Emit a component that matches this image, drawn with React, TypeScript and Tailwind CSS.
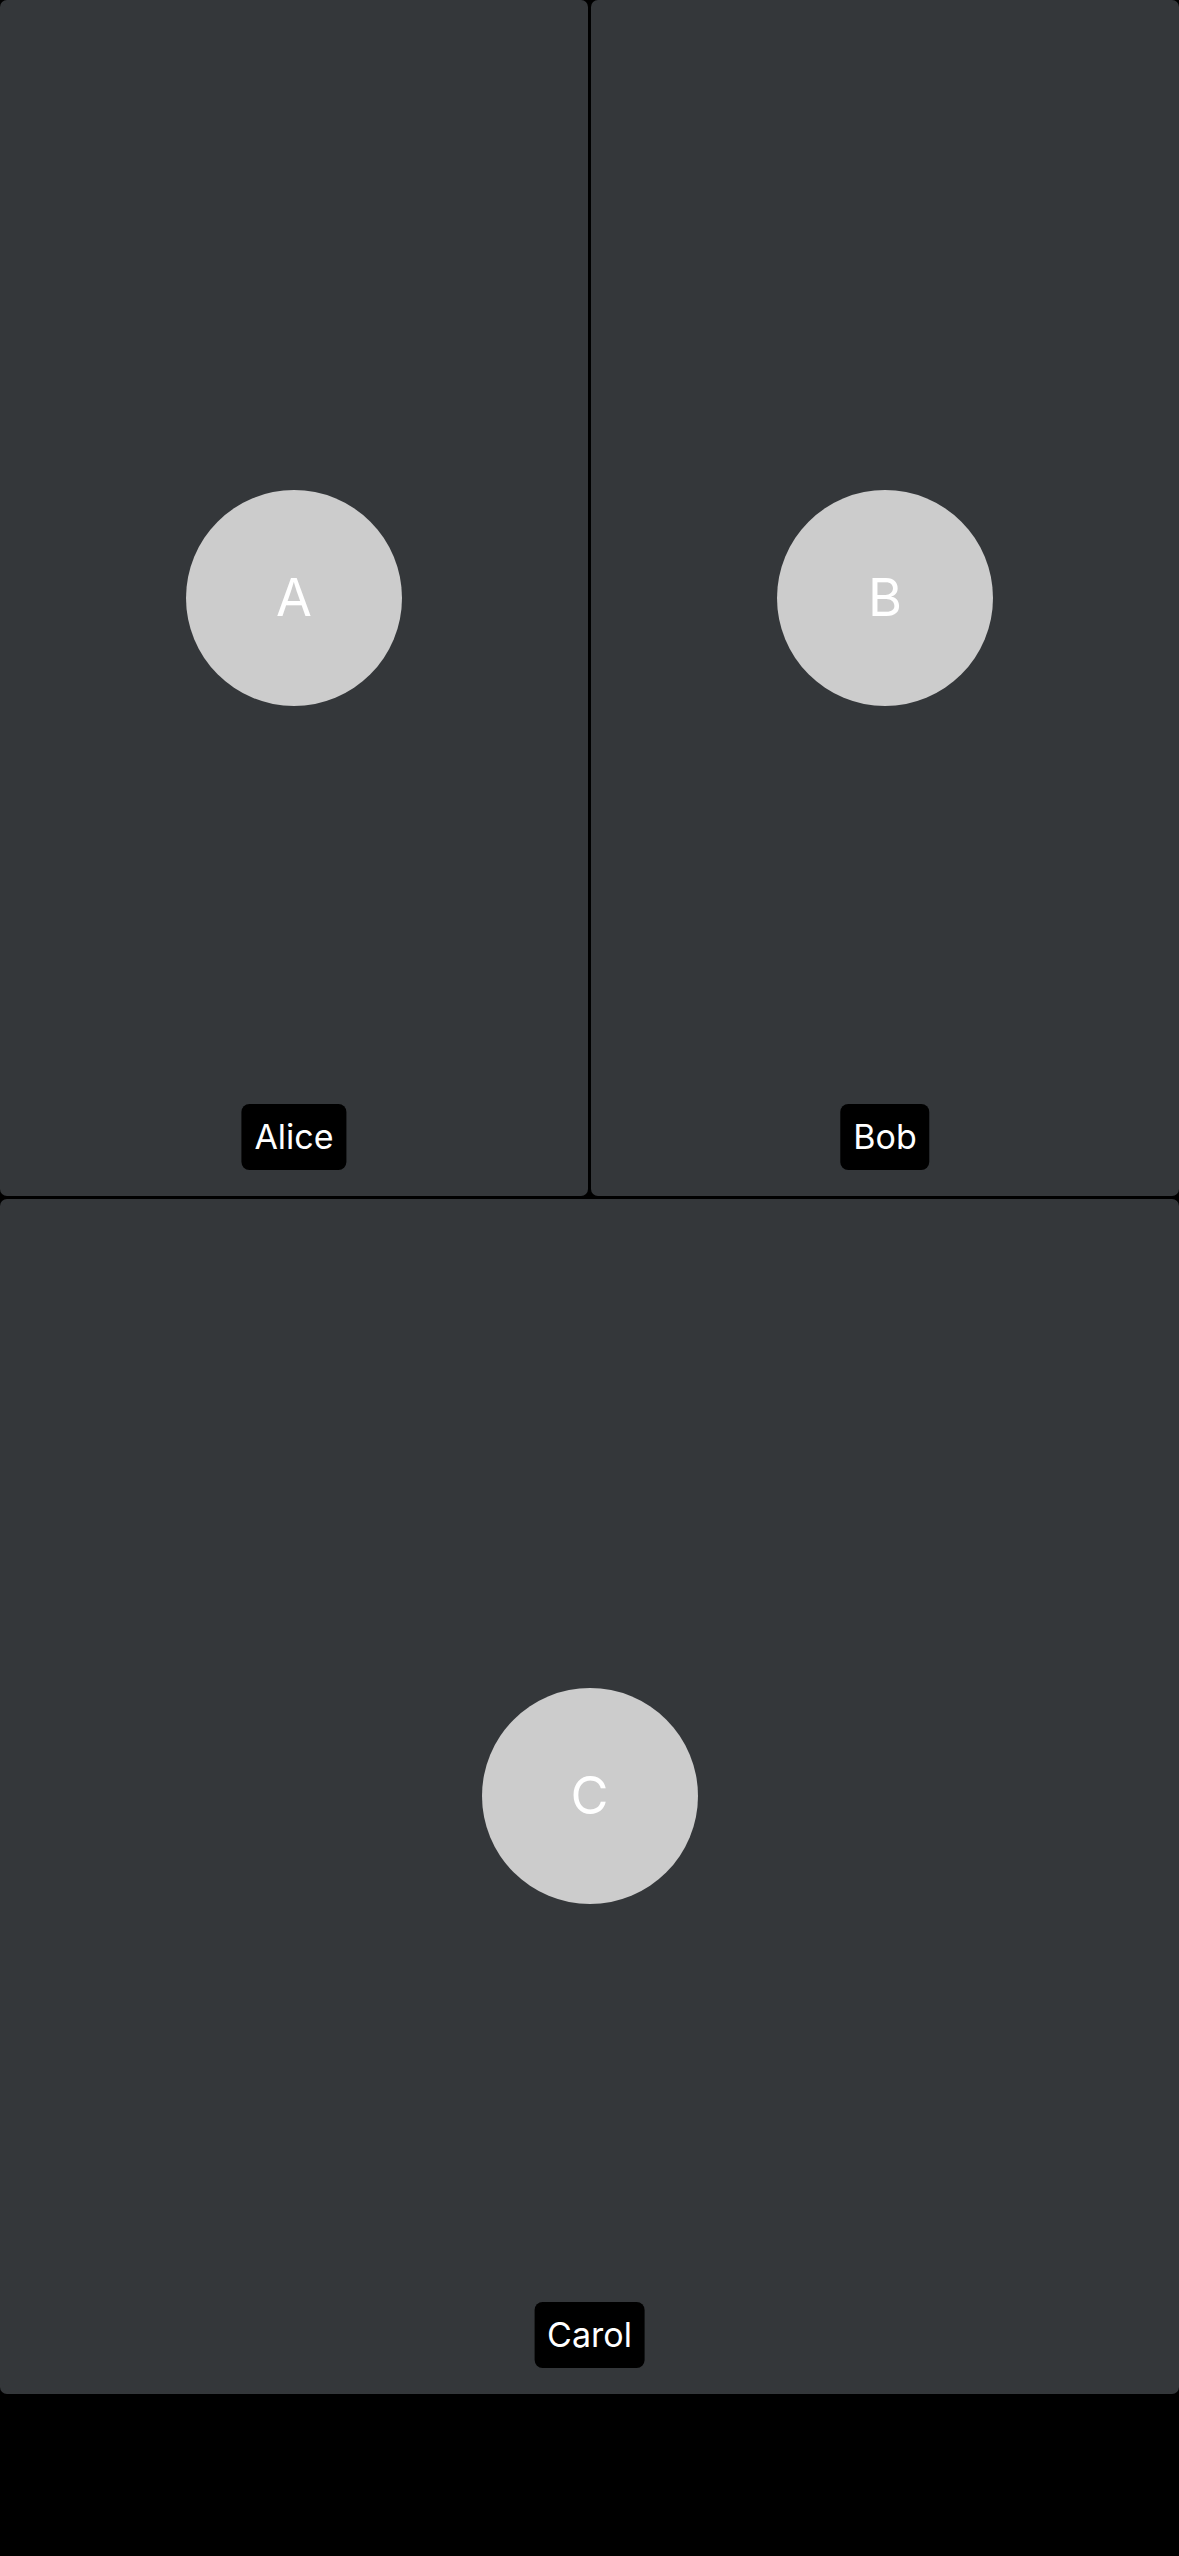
import React from "react";

function Tile({ letter, name }: { letter: string; name: string }) {
  return (
    <div className="relative flex items-center justify-center rounded-[7px] bg-[#34373a]">
      <div className="flex h-[216px] w-[216px] items-center justify-center rounded-full bg-[#cccccc]">
        <span className="text-[52px] leading-none text-white">{letter}</span>
      </div>
      <div className="absolute bottom-[26px] left-1/2 flex h-[66px] -translate-x-1/2 items-center rounded-[8px] bg-black px-[13px]">
        <span className="text-[34px] leading-none text-white">{name}</span>
      </div>
    </div>
  );
}

export default function App() {
  return (
    <div
      className="h-[2556px] w-[1179px] bg-black"
      style={{ fontFamily: "Inter, 'Noto Sans', sans-serif" }}
    >
      <div className="grid h-[2394px] grid-cols-2 grid-rows-2 gap-[3px]">
        <Tile letter="A" name="Alice" />
        <Tile letter="B" name="Bob" />
        <div className="col-span-2 grid">
          <Tile letter="C" name="Carol" />
        </div>
      </div>
    </div>
  );
}
